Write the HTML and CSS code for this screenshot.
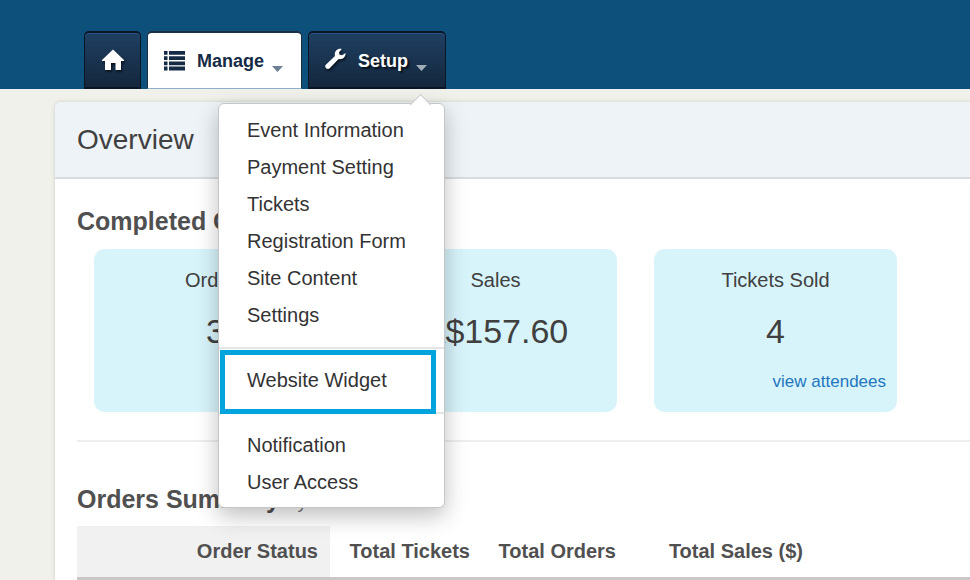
FILE: index.html
```html
<!DOCTYPE html>
<html lang="en">
  <head>
    <meta charset="UTF-8" />
    <meta name="viewport" content="width=device-width, initial-scale=1.0" />
    <title>Overview</title>
    <link rel="stylesheet" href="styles.css">
  </head>
  <body>
    <header class="topbar">
      <nav class="tabs">
        <a href="#" class="tab tab-home" aria-label="Home">
          <svg width="22" height="22" viewBox="0 0 22 22"><path d="M11 0.5 L22 11 V12 H19 V21 H13.5 V14 H9 V21 H3 V12 H0 V11 Z" /></svg>
        </a>
        <button type="button" class="tab tab-active">
          <svg class="icon-list" width="21" height="20" viewBox="0 0 21 20">
            <path d="M0 0h3.5v3.8H0zM5 0h16v3.8H5zM0 5.2h3.5v3.8H0zM5 5.2h16v3.8H5zM0 10.4h3.5v3.8H0zM5 10.4h16v3.8H5zM0 15.6h3.5v3.8H0zM5 15.6h16v3.8H5z" />
          </svg>
          <span>Manage</span>
          <svg class="arrow" width="11" height="6" viewBox="0 0 11 6"><path d="M0 0H11L5.5 6Z" /></svg>
        </button>
        <div class="tab-group">
          <button type="button" class="tab tab-setup">
            <svg class="icon-wrench" width="21" height="22" viewBox="0 0 21 22">
              <path d="M16.8 1 L14 4.2 L14.5 6.8 L17.2 7.3 L20.6 5 C20.6 9 17.6 11.8 13.6 11 L4.4 20.6 C2.2 22.2 -0.8 19.2 0.6 17 L10 8 C8.8 3.4 12.6 -0.2 16.8 1 Z" />
            </svg>
            <span>Setup</span>
            <svg class="arrow" width="11" height="6" viewBox="0 0 11 6"><path d="M0 0H11L5.5 6Z" /></svg>
          </button>
          <ul class="menu">
            <li><a href="#">Event Information</a></li>
            <li><a href="#">Payment Setting</a></li>
            <li><a href="#">Tickets</a></li>
            <li><a href="#">Registration Form</a></li>
            <li><a href="#">Site Content</a></li>
            <li><a href="#">Settings</a></li>
            <li class="divider"></li>
            <li class="highlight"><a href="#">Website Widget</a></li>
            <li class="divider"></li>
            <li><a href="#">Notification</a></li>
            <li><a href="#">User Access</a></li>
          </ul>
        </div>
      </nav>
    </header>

    <main class="panel">
      <h1 class="panel-title">Overview</h1>
      <div class="panel-body">
        <h2>Completed Orders</h2>
        <div class="cards">
          <div class="card">
            <p class="card-label">Orders</p>
            <p class="card-value">3</p>
          </div>
          <div class="card">
            <p class="card-label">Sales</p>
            <p class="card-value">A$157.60</p>
          </div>
          <div class="card">
            <p class="card-label">Tickets Sold</p>
            <p class="card-value">4</p>
            <a href="#" class="card-link">view attendees</a>
          </div>
        </div>
        <hr />
        <h2 class="summary-title">Orders Summary <small>by order status</small></h2>
        <table class="summary">
          <thead>
            <tr>
              <th class="col-status">Order Status</th>
              <th class="col-tickets">Total Tickets</th>
              <th class="col-orders">Total Orders</th>
              <th class="col-sales">Total Sales ($)</th>
              <td></td>
            </tr>
          </thead>
        </table>
      </div>
    </main>
  </body>
</html>
```

FILE: styles.css
```css
* {
  box-sizing: border-box;
}

body {
  margin: 0;
  background-color: #f0f1ea;
  color: #404040;
  font-family: "Liberation Sans", Arial, sans-serif;
  font-size: 20px;
}

/* Top navigation */
.topbar {
  background-color: #0e507c;
  padding: 31px 0 0 84px;
}

.tabs {
  display: flex;
  gap: 6px;
}

.tab-group {
  position: relative;
}

.tab {
  display: flex;
  align-items: center;
  height: 58px;
  padding: 2px 16px 0;
  border: 1px solid #0a1626;
  border-top-width: 2px;
  border-bottom-width: 2px;
  border-radius: 5px 5px 0 0;
  background: linear-gradient(#1f3f62, #14273d);
  box-shadow: inset 0 1px 0 #2b5588;
  color: #fff;
  fill: #fff;
  font-family: inherit;
  font-size: 18px;
  font-weight: bold;
  text-shadow: 2px 2px 2px rgba(0, 0, 0, 0.7);
  cursor: pointer;
}

.tab svg {
  flex-shrink: 0;
  filter: drop-shadow(1px 2px 1px rgba(0, 0, 0, 0.6));
}

.tab-home {
  justify-content: center;
  width: 57px;
  padding-top: 0;
}

.tab-active {
  width: 155px;
  border-color: #1d2f42;
  border-bottom: 1px solid #8fb0cc;
  background: #fff;
  box-shadow: none;
  color: #162b45;
  fill: #162b45;
  text-shadow: none;
}

.tab-setup {
  width: 138px;
}

.tab .icon-list,
.tab .arrow {
  filter: none;
}

.icon-list,
.icon-wrench {
  margin-right: 12px;
}

.icon-list {
  margin-bottom: 2px;
}

.icon-wrench {
  margin-bottom: 4px;
}

.arrow {
  margin: 14px 0 0 8px;
  fill: #a3adb8;
}

.tab-active .arrow {
  fill: #6c7f95;
}

/* Setup dropdown */
.menu {
  position: absolute;
  top: 72px;
  right: 1px;
  z-index: 10;
  width: 227px;
  margin: 0;
  padding: 8px 0 6px;
  border: 1px solid #c4c6c8;
  border-radius: 6px;
  background: #fff;
  box-shadow: 0 8px 22px rgba(0, 0, 0, 0.25);
  list-style: none;
}

.menu::before {
  content: "";
  position: absolute;
  top: -7px;
  right: 16px;
  width: 14px;
  height: 14px;
  border: 1px solid #c4c6c8;
  border-right: none;
  border-bottom: none;
  background: #fff;
  transform: rotate(45deg);
}

.menu a {
  display: block;
  padding-left: 28px;
  color: #333;
  line-height: 37px;
  text-decoration: none;
}

.divider {
  height: 2px;
  margin: 13px 0;
  background: #e5e5e5;
}

.highlight {
  position: relative;
}

.highlight::after {
  content: "";
  position: absolute;
  top: -12px;
  right: 8px;
  bottom: -15px;
  left: 1px;
  border: 5px solid #00a4dc;
  z-index: 1;
  pointer-events: none;
}

/* Overview panel */
.panel {
  margin: 13px 0 0 55px;
  border-radius: 6px 0 0 0;
  background: #fff;
  box-shadow: 0 0 4px rgba(0, 0, 0, 0.15);
}

.panel-title {
  margin: 0;
  padding: 0 22px;
  border-bottom: 2px solid #d9dcdf;
  border-radius: 6px 0 0 0;
  background: #eef3f8;
  font-size: 28px;
  font-weight: normal;
  line-height: 75px;
}

.panel-body {
  padding: 26px 0 0 22px;
}

h2 {
  margin: 0 0 12px;
  color: #505050;
  font-size: 25px;
  line-height: 32px;
}

h2 small {
  color: #777;
  font-size: 19px;
  font-weight: normal;
  line-height: 1;
}

.cards {
  display: flex;
  gap: 37px;
  padding: 0 17px;
}

.card {
  display: flex;
  flex-direction: column;
  flex: 0 1 243px;
  padding: 16px 11px 18px;
  border-radius: 11px;
  background: #d8f4fb;
  text-align: center;
}

.card p {
  margin: 0;
}

.card-label {
  line-height: 30px;
}

.card .card-value {
  margin: 14px 0 17px;
  font-size: 34px;
  line-height: 44px;
}

.card-link {
  color: #2276bd;
  font-size: 17px;
  line-height: 24px;
  text-align: right;
  text-decoration: none;
}

hr {
  height: 2px;
  margin: 28px 0 41px;
  border: none;
  background: #eee;
}

.summary-title {
  margin-bottom: 11px;
}

/* Orders table */
.summary {
  width: 100%;
  table-layout: fixed;
  border-spacing: 0;
}

.summary th,
.summary td {
  height: 54px;
  padding: 0 12px;
  border-bottom: 3px solid #c8c8c8;
  color: #505050;
  text-align: right;
}

.col-status {
  width: 253px;
  background: #f1f1f1;
}

.col-tickets {
  width: 152px;
}

.col-orders {
  width: 146px;
}

.col-sales {
  width: 187px;
}
```
